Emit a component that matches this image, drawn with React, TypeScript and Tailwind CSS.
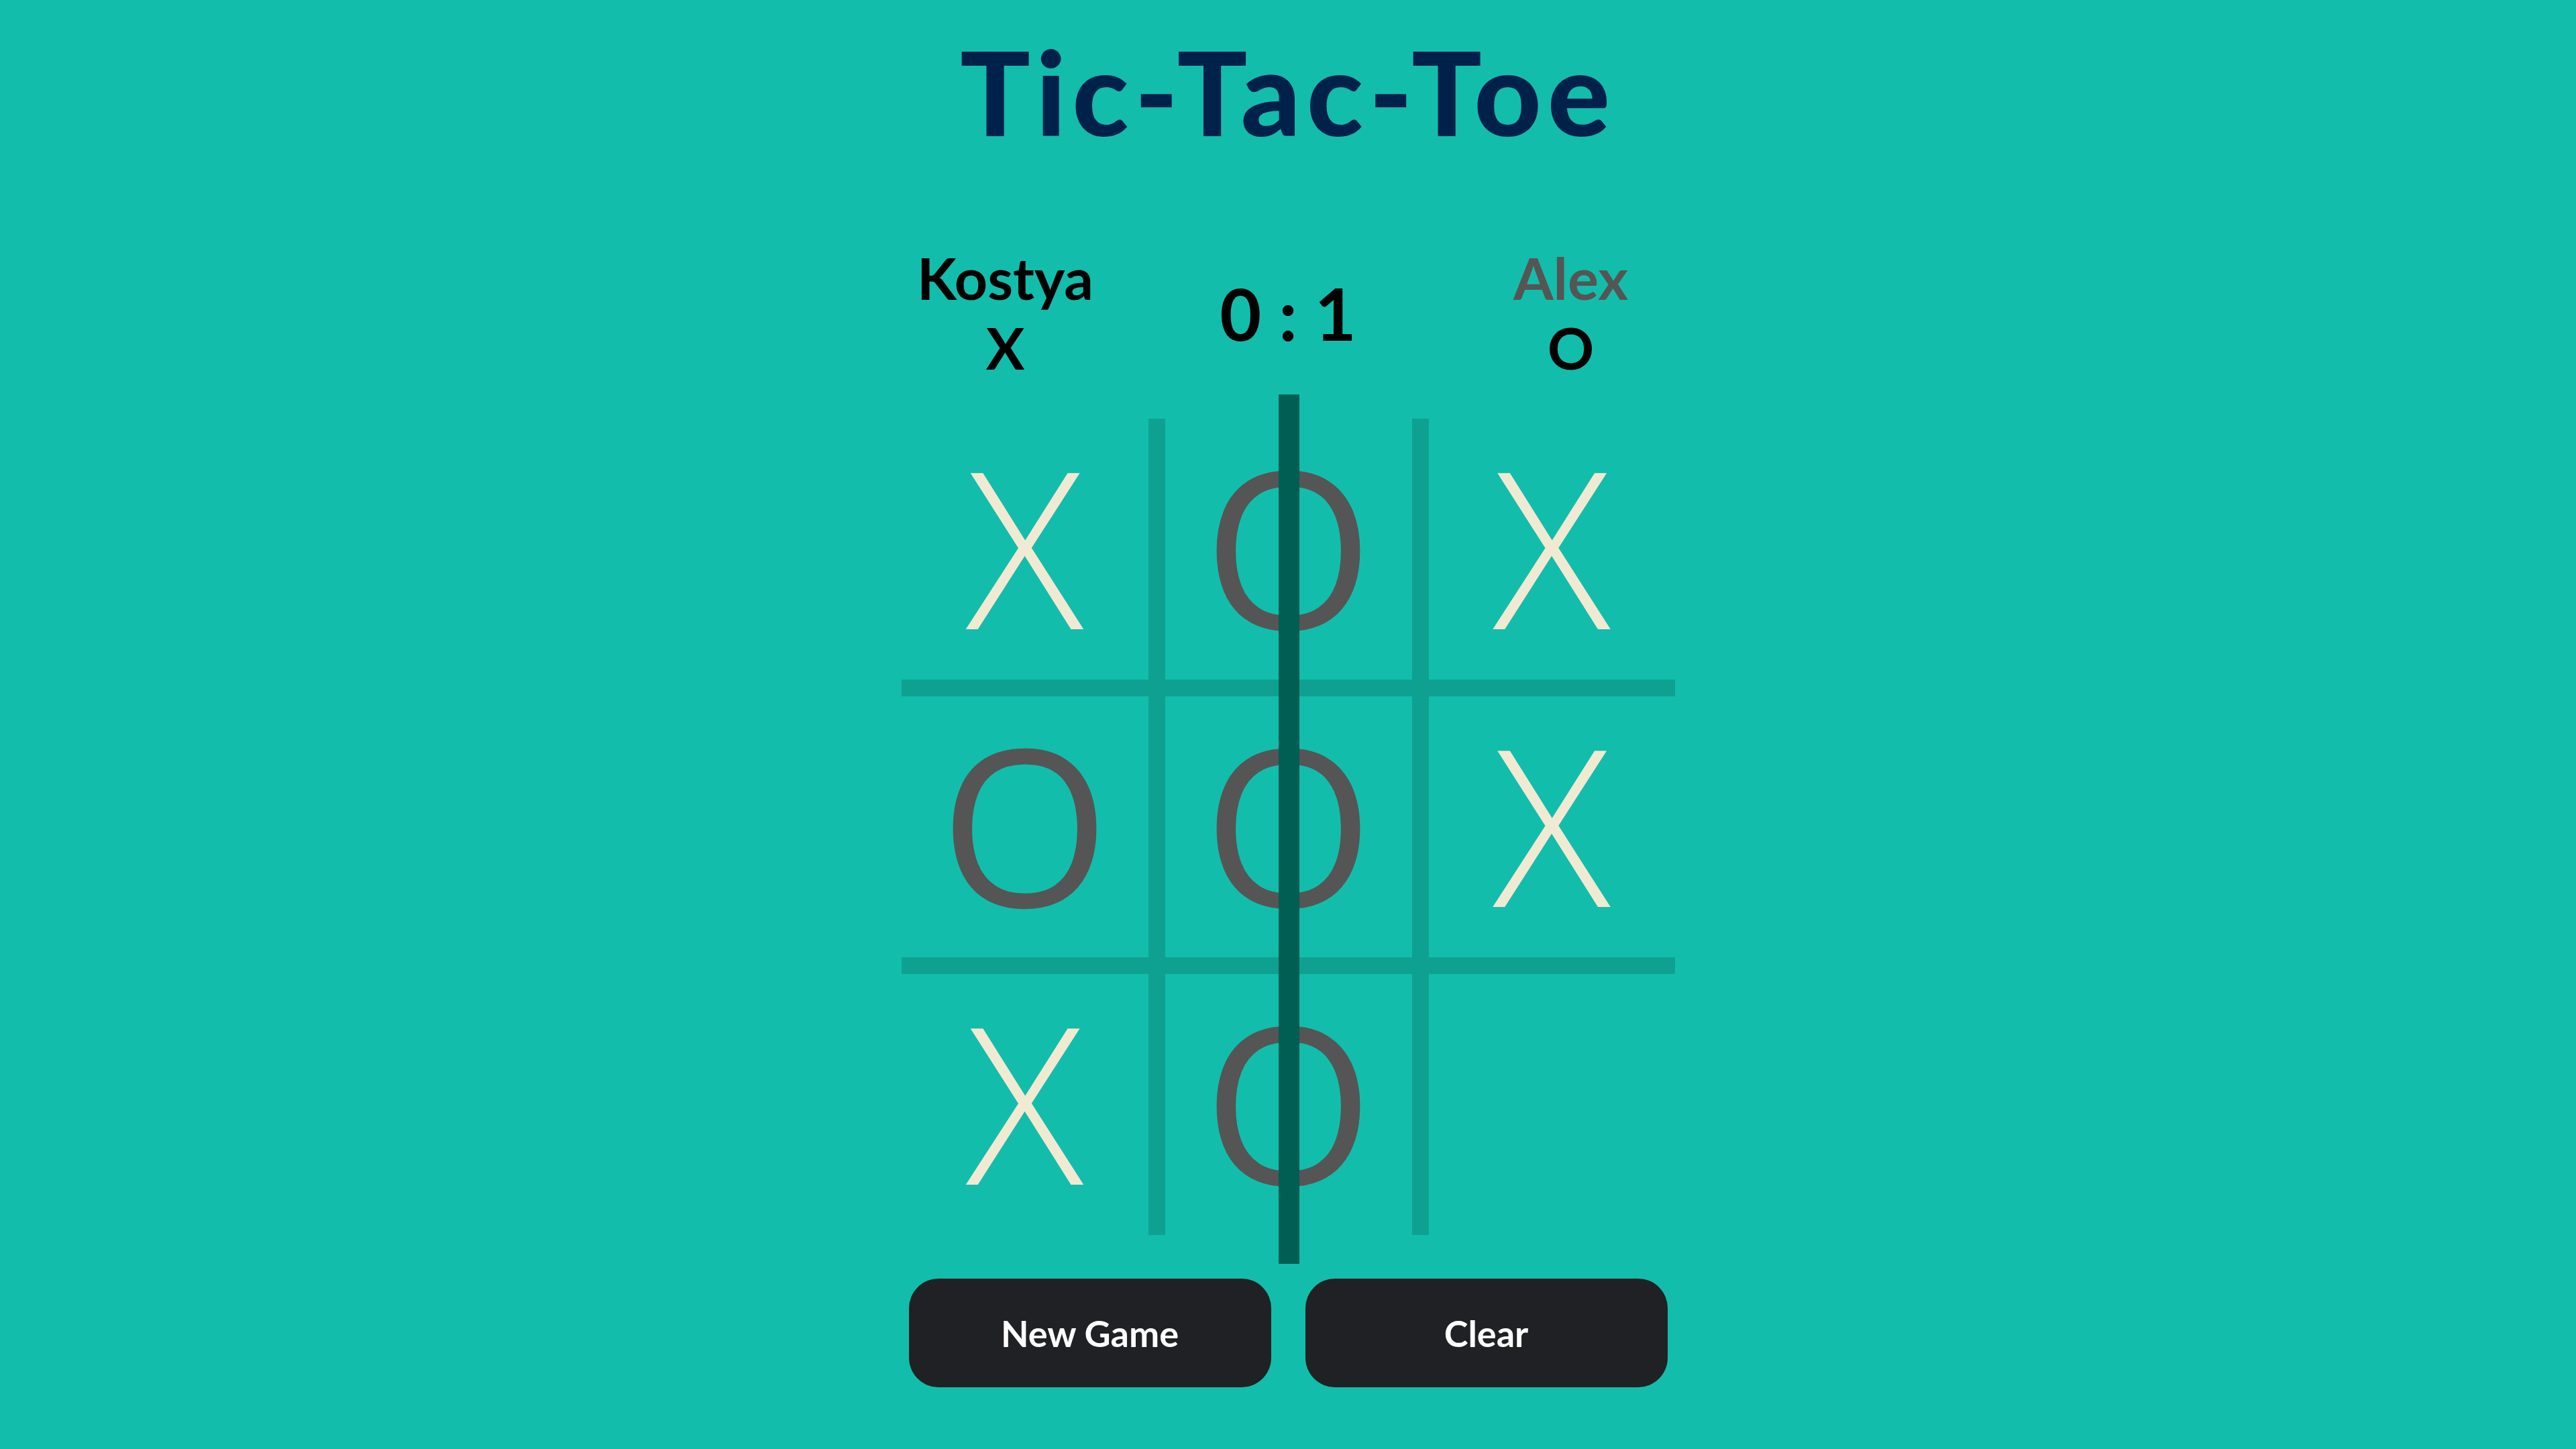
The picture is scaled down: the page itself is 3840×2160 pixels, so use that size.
import React, { useState } from 'react';

type Mark = 'X' | 'O' | null;

// Final board state from the screenshot
const INITIAL_BOARD: Mark[] = ['X', 'O', 'X', 'O', 'O', 'X', 'X', 'O', null];

const Cell: React.FC<{ value: Mark; onClick: () => void }> = ({ value, onClick }) => (
  <button
    onClick={onClick}
    className="bg-[#13bdab] flex items-center justify-center cursor-pointer pb-[14px]"
  >
    {value === 'X' && (
      <span className="font-['Open_Sans',sans-serif] font-[350] text-[326px] leading-none text-[#f1ead2]">X</span>
    )}
    {value === 'O' && (
      <span className="font-['Open_Sans',sans-serif] font-normal text-[326px] leading-none text-[#555555]">O</span>
    )}
  </button>
);

export default function App() {
  const [board, setBoard] = useState<Mark[]>(INITIAL_BOARD);
  const [score] = useState({ x: 0, o: 1 });

  const handleClear = () => setBoard(Array(9).fill(null));

  return (
    <div className="min-h-screen w-full bg-[#13bdab] flex flex-col items-center font-['Lato',sans-serif]">
      <h1 className="mt-[49px] text-[174px] leading-none font-black text-[#00214a] tracking-[9px]">
        Tic-Tac-Toe
      </h1>

      {/* Scoreboard */}
      <div className="mt-[139px] w-[1153px] flex items-center justify-between">
        <div className="w-[310px] flex flex-col items-center text-[86px] leading-[104px] font-bold text-black">
          <span>Kostya</span>
          <span>X</span>
        </div>
        <div className="text-[107px] leading-none font-bold text-black">
          {score.x} : {score.o}
        </div>
        <div className="w-[310px] flex flex-col items-center text-[86px] leading-[104px] font-bold">
          <span className="text-[#555555]">Alex</span>
          <span className="text-black">O</span>
        </div>
      </div>

      {/* Board */}
      <div className="relative mt-[54px]">
        <div className="grid grid-cols-[368px_368px_367px] grid-rows-[389px_389px_389px] gap-[25px] bg-[#0ea192]">
          {board.map((v, i) => (
            <Cell
              key={i}
              value={v}
              onClick={() => {
                if (board[i]) return;
                const next = [...board];
                next[i] = board.filter(Boolean).length % 2 === 0 ? 'X' : 'O';
                setBoard(next);
              }}
            />
          ))}
        </div>
        {/* Winning line through the middle column */}
        <div className="absolute left-[562px] top-[-36px] bottom-[-43px] w-[31px] bg-[#005e53]" />
      </div>

      {/* Controls */}
      <div className="mt-[65px] flex gap-[51px]">
        <button
          onClick={handleClear}
          className="w-[540px] h-[162px] rounded-[44px] bg-[#202124] text-white text-[54px] font-bold"
        >
          New Game
        </button>
        <button
          onClick={handleClear}
          className="w-[540px] h-[162px] rounded-[44px] bg-[#202124] text-white text-[54px] font-bold"
        >
          Clear
        </button>
      </div>
    </div>
  );
}
